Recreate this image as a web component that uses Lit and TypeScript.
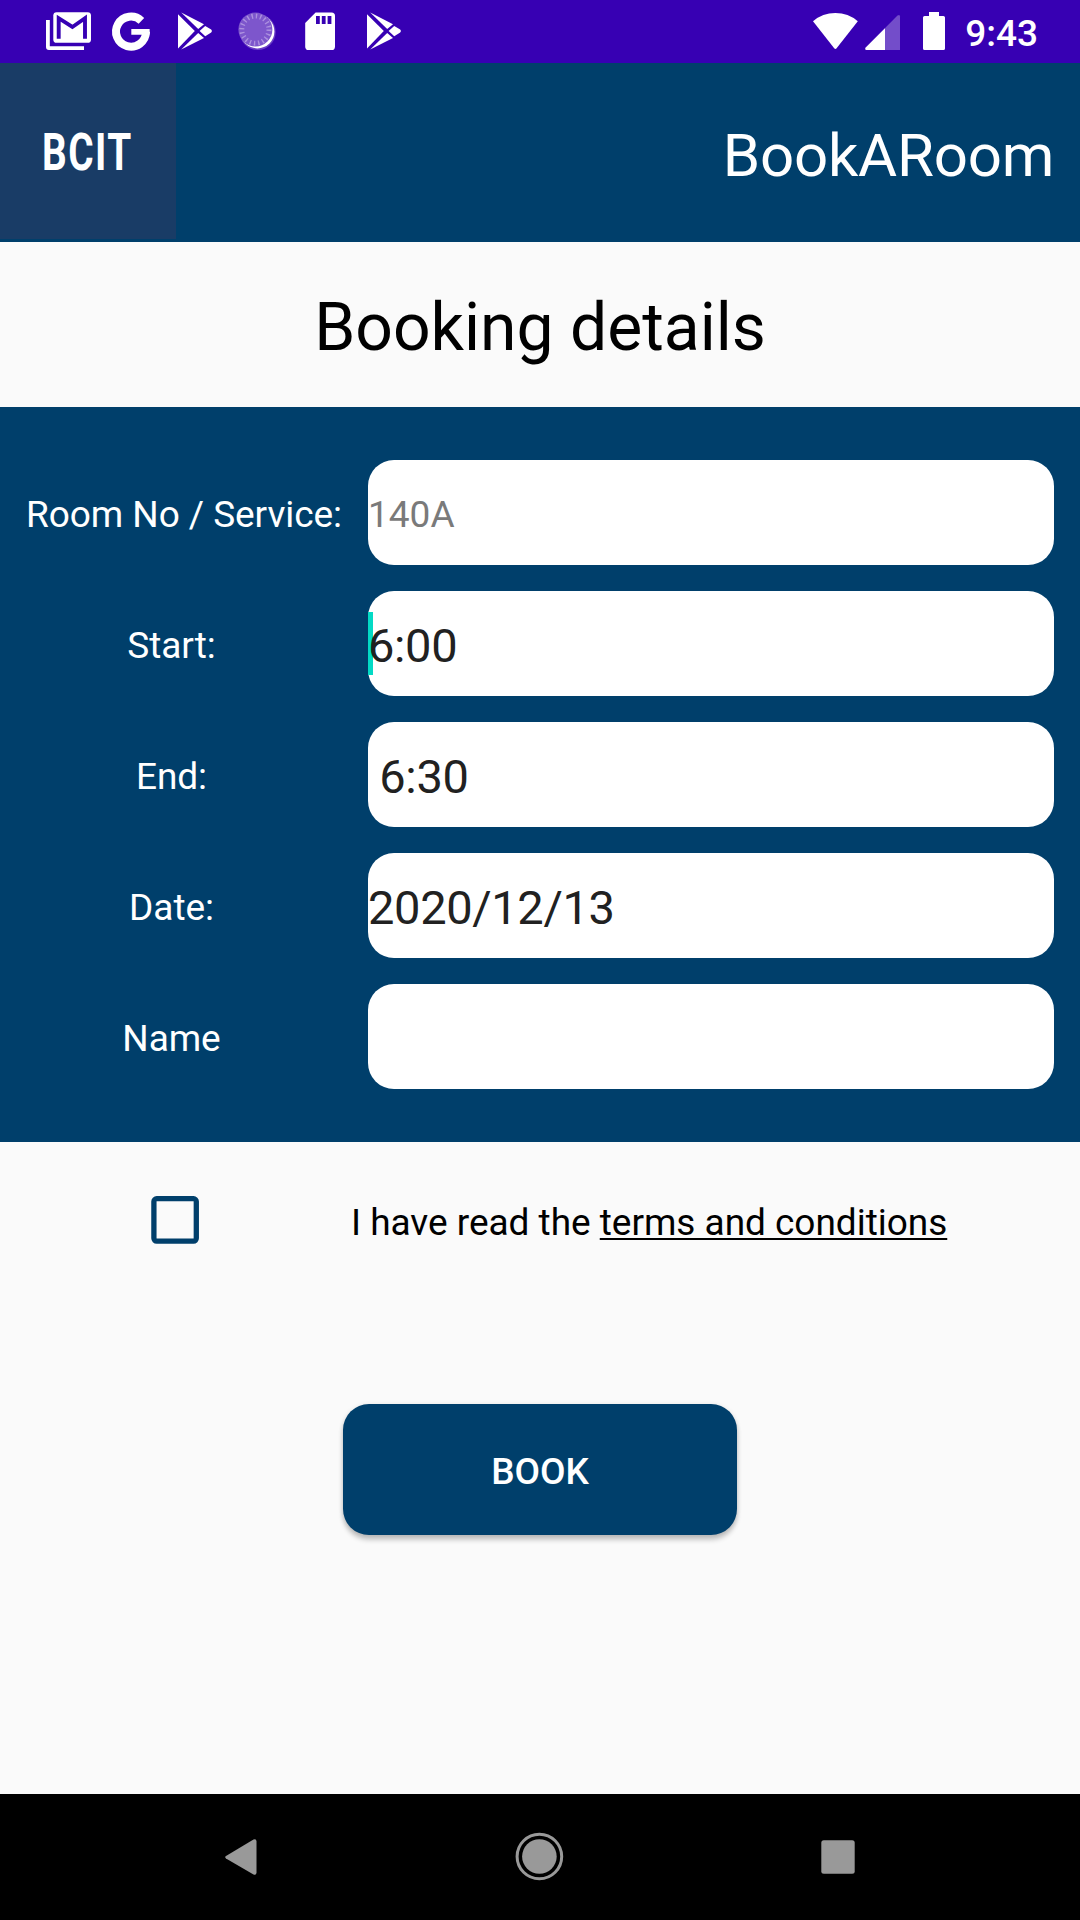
import { LitElement, html, css, svg, nothing } from "lit";
import { customElement } from "lit/decorators.js";

const play = svg`
  <path d="M0 2.2 16.8 19 0 36.6z" />
  <path d="M3.2 .6 26 12.2 20.2 17z" />
  <path d="M3.2 37.6 26 26 20.2 21z" />
  <path d="M21.6 19 27.2 14 33.2 17.4Q34.8 19 33.2 20.6L27.2 24.2z" />`;

@customElement("status-bar")
class StatusBar extends LitElement {
  static styles = css`
    :host {
      display: flex;
      align-items: flex-start;
      box-sizing: border-box;
      height: 63px;
      padding: 12px 42px 0 46px;
      background: #3700b3;
      color: #fff;
      font: 500 37px/38px Roboto, sans-serif;
    }
    svg { display: block; flex: none; height: 39px; fill: #fff; overflow: visible; }
    .gmail { width: 45px; margin-right: 21px; }
    .google { width: 38px; margin-right: 28px; }
    .play { width: 34px; margin-right: 27px; }
    .sync { width: 37px; margin-right: 29px; }
    .card { width: 30px; margin-right: 32px; }
    .spacer { flex: 1; }
    .wifi { width: 45px; margin-right: 7px; }
    .signal { width: 35px; margin-right: 23px; }
    .battery { width: 22px; margin-right: 20.5px; }
    .clock { padding-top: 3px; }
  `;

  render() {
    return html`
      <svg class="gmail" viewBox="0 0 45 39">
        <path d="M0 8h3.8v26.2H38V38H3Q0 38 0 35z" />
        <rect x="7.3" y=".2" width="37.7" height="30.6" rx="3.4" />
        <path d="M12.7 26.8V6.2L26.4 15 39 6.2V26.8" fill="none" stroke="#3700b3" stroke-width="3.9" />
      </svg>
      <svg class="google" viewBox="0 0 38 39">
        <path d="M29.4 8.8A15 15 0 1 0 34 20" fill="none" stroke="#fff" stroke-width="8" />
        <path d="M19.3 17h18.3q.4 2.6-.2 5.7H19.3z" />
      </svg>
      <svg class="play" viewBox="0 0 34 39">${play}</svg>
      <svg class="sync" viewBox="0 0 37 39">
        <circle cx="18.7" cy="20" r="18" fill="#8c68d2" opacity=".6" />
        <circle cx="18.4" cy="19.4" r="17" />
        <circle cx="16.4" cy="17.6" r="17" fill="#7d56cc" />
        <circle cx="16.4" cy="17.6" r="13.6" fill="none" stroke="#ac90df" stroke-width="5" stroke-dasharray="1.4 2.873" />
      </svg>
      <svg class="card" viewBox="0 0 30 39">
        <path d="M10.6.4H26.5Q30 .4 30 4V34.4Q30 38 26.5 38H3.6Q.2 38 .2 34.4V11z" />
        <path d="M11 4h3.8v8H11zM16.8 4h3.8v8h-3.8zM22.6 4h3.8v8h-3.8z" fill="#3700b3" />
      </svg>
      <svg class="play" viewBox="0 0 34 39">${play}</svg>
      <span class="spacer"></span>
      <svg class="wifi" viewBox="0 0 45 39">
        <path d="M0 9.2Q9.5 1 22.4 1T44.8 9.2L23.6 36.2Q22.4 37.6 21.2 36.2z" />
      </svg>
      <svg class="signal" viewBox="0 0 35 39">
        <path d="M1 35.3 32.5 3.6Q35 2 35 4.6V38H1.5Q-.8 37.6 1 35.3z" opacity=".3" />
        <path d="M1 35.3 20 16.2V38H1.5Q-.8 37.6 1 35.3z" />
      </svg>
      <svg class="battery" viewBox="0 0 22 39">
        <path d="M6 0H16V4H20.4Q22 4 22 5.6V36.4Q22 38 20.4 38H1.6Q0 38 0 36.4V5.6Q0 4 1.6 4H6z" />
      </svg>
      <span class="clock">9:43</span>
    `;
  }
}

@customElement("form-row")
class FormRow extends LitElement {
  static properties = {
    label: {},
    value: {},
    muted: { type: Boolean },
    focused: { type: Boolean },
    wide: { type: Boolean },
  };
  declare label: string;
  declare value: string;
  declare muted: boolean;
  declare focused: boolean;
  declare wide: boolean;

  static styles = css`
    :host { display: flex; height: 105px; }
    .label {
      flex: none;
      width: 342px;
      box-sizing: border-box;
      padding: 2px 0 0 1px;
      text-align: center;
      color: #fff;
      font-size: 37px;
      letter-spacing: -0.06px;
      line-height: 105px;
      white-space: nowrap;
    }
    .wide { padding-left: 26px; }
    .field {
      position: relative;
      flex: 1;
      margin-left: 26px;
      box-sizing: border-box;
      height: 105px;
      padding-top: 4px;
      border-radius: 26px;
      background: #fff;
      color: #212121;
      font-size: 47px;
      letter-spacing: -0.35px;
      line-height: 101px;
    }
    .muted { color: #7a7a7a; font-size: 37px; letter-spacing: 0; }
    .caret { position: absolute; left: 0; top: 21px; width: 5px; height: 63px; background: #03dac5; }
    .text { position: relative; white-space: pre; }
  `;

  render() {
    return html`
      <div class="label ${this.wide ? "wide" : ""}">${this.label}</div>
      <div class="field ${this.muted ? "muted" : ""}">
        ${this.focused ? html`<span class="caret"></span>` : nothing}<span class="text">${this.value}</span>
      </div>
    `;
  }
}

const rows = [
  { label: "Room No / Service:", value: "140A", muted: true, wide: true },
  { label: "Start:", value: "6:00", focused: true },
  { label: "End:", value: " 6:30" },
  { label: "Date:", value: "2020/12/13" },
  { label: "Name", value: "" },
];

@customElement("app-root")
class AppRoot extends LitElement {
  static styles = css`
    :host {
      display: flex;
      flex-direction: column;
      width: 1080px;
      height: 1920px;
      background: #fafafa;
      color: #000;
      font-family: Roboto, sans-serif;
    }
    .header {
      display: flex;
      justify-content: space-between;
      height: 179px;
      background: #003f6b;
      color: #fff;
    }
    .logo { display: block; width: 176px; height: 176px; background: #193c66; }
    .brand { padding: 3px 26px 0 0; font-size: 60px; letter-spacing: -0.25px; line-height: 179px; }
    .title { height: 165px; text-align: center; font-size: 66px; line-height: 171px; }
    .form {
      display: flex;
      flex-direction: column;
      gap: 26px;
      box-sizing: border-box;
      height: 735px;
      padding: 53px 26px 0 0;
      background: #003f6b;
    }
    .terms { display: flex; align-items: flex-start; height: 262px; }
    .check { display: block; width: 48px; height: 48px; margin: 54px 152px 0 151px; }
    .agree { padding-top: 59px; font-size: 37px; letter-spacing: -0.03px; line-height: 44px; }
    .agree u { text-decoration-thickness: 2px; text-underline-offset: 3px; }
    .book {
      align-self: center;
      width: 394px;
      height: 131px;
      border: 0;
      padding: 4px 0 0;
      border-radius: 26px;
      background: #003f6b;
      color: #fff;
      font: 500 37px/44px Roboto, sans-serif;
      box-shadow: 0 5px 5px rgba(0, 0, 0, 0.2), 0 1px 5px rgba(0, 0, 0, 0.12);
    }
    .nav {
      display: flex;
      justify-content: center;
      align-items: center;
      gap: 250.5px;
      box-sizing: border-box;
      height: 126px;
      margin-top: auto;
      padding-right: 1px;
      background: #000;
    }
    .nav svg { display: block; width: 48px; height: 48px; fill: #999; overflow: visible; }
  `;

  render() {
    return html`
      <status-bar></status-bar>
      <div class="header">
        <svg class="logo" viewBox="0 0 176 176">
          <text transform="translate(42 106.8) scale(.745 1)" font-family="Roboto, sans-serif" font-weight="700"
            font-size="52" letter-spacing="2" fill="#fff">BCIT</text>
        </svg>
        <div class="brand">BookARoom</div>
      </div>
      <div class="title">Booking details</div>
      <div class="form">
        ${rows.map(
          (r) => html`<form-row .label=${r.label} .value=${r.value} .muted=${!!r.muted} .focused=${!!r.focused} .wide=${!!r.wide}></form-row>`,
        )}
      </div>
      <div class="terms">
        <svg class="check" viewBox="0 0 48 48">
          <rect x="2.9" y="2.7" width="42.4" height="42.4" rx="2.8" fill="none" stroke="#003f6b" stroke-width="5.3" />
        </svg>
        <div class="agree">I have read the <u>terms and conditions</u></div>
      </div>
      <button class="book">BOOK</button>
      <div class="nav">
        <svg viewBox="0 0 48 48"><path d="M9 23 36.5 6.6Q39.5 5.6 39.5 8.6V39.4Q39.5 42.4 36.5 41.4L9 25.4Q7.4 24.2 9 23z" /></svg>
        <svg viewBox="0 0 48 48">
          <circle cx="23.4" cy="23.5" r="22.3" fill="none" stroke="#999" stroke-width="3" />
          <circle cx="23.4" cy="23.5" r="17.3" />
        </svg>
        <svg viewBox="0 0 48 48"><rect x="7.3" y="7.3" width="33.4" height="33.4" rx="2.5" /></svg>
      </div>
    `;
  }
}
